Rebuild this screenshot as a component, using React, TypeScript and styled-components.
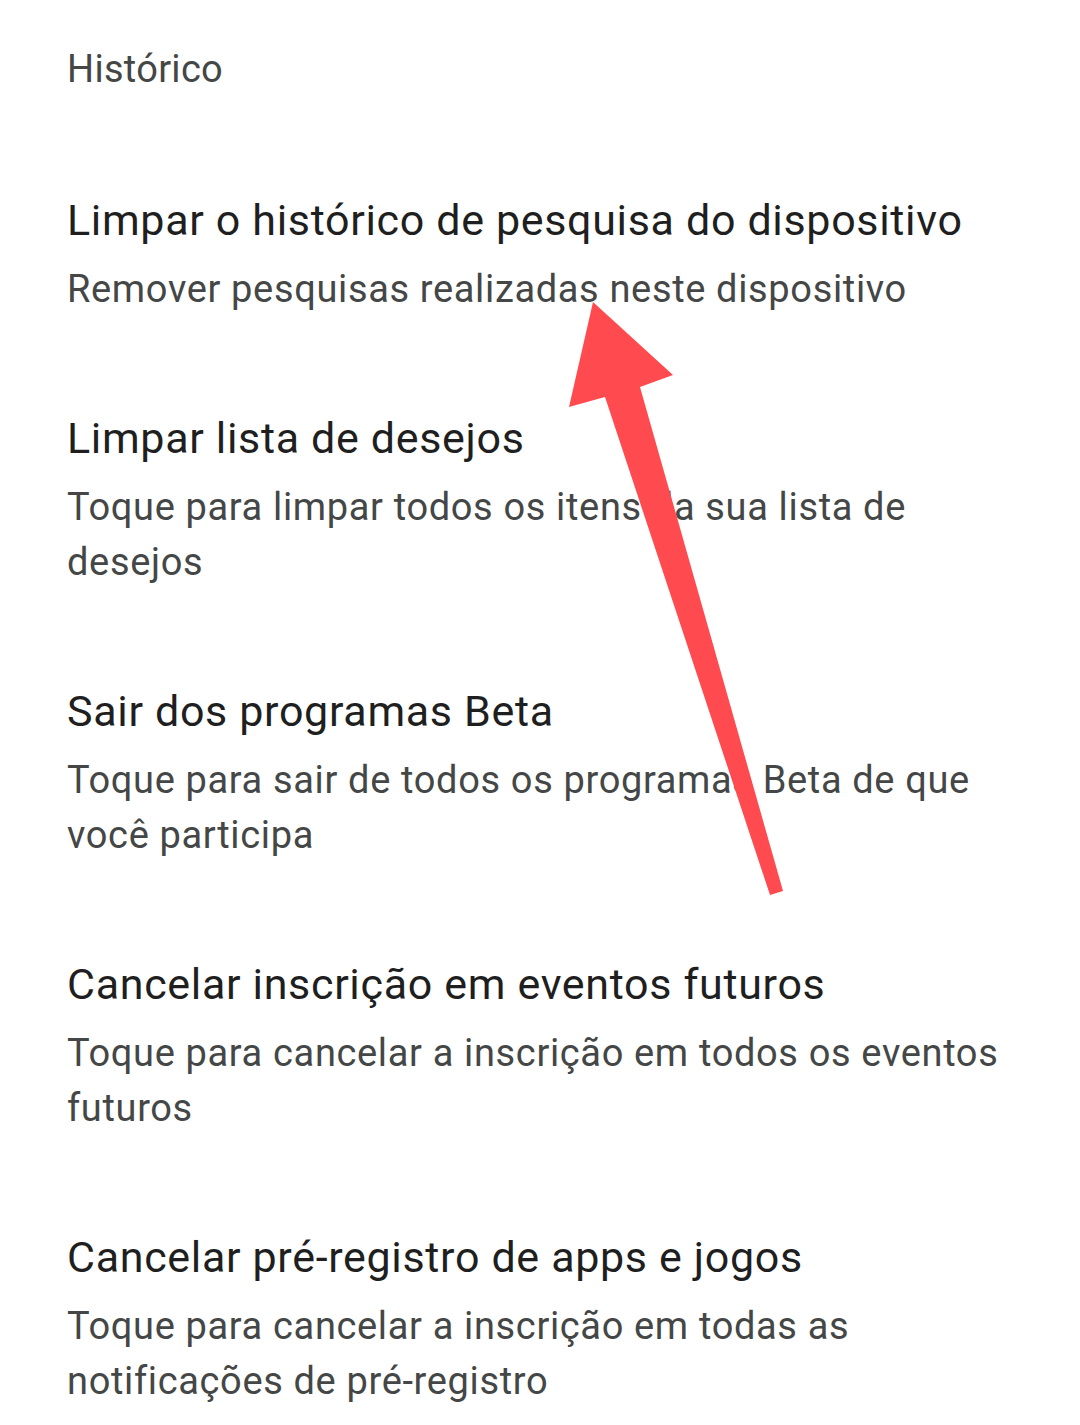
import React from 'react';
import styled, { createGlobalStyle } from 'styled-components';

const GlobalStyle = createGlobalStyle`
  html, body {
    margin: 0;
    padding: 0;
    background: #ffffff;
  }
  body {
    font-family: Roboto, "Noto Sans", "Liberation Sans", sans-serif;
    -webkit-font-smoothing: antialiased;
  }
`

const Screen = styled.div`
  position: relative;
  width: 1080px;
  height: 1425px;
  overflow: hidden;
  background: #ffffff;
`

const Content = styled.div`
  display: flex;
  flex-direction: column;
  padding: 44px 53px 0 67px;
`

const SectionHeader = styled.div`
  font-size: 38px;
  line-height: 50px;
  letter-spacing: 0.3px;
  color: #444746;
  margin-bottom: 98px;
`

const List = styled.div`
  display: flex;
  flex-direction: column;
  gap: 93px;
`

const Item = styled.div`
  display: flex;
  flex-direction: column;
  gap: 14px;
`

const Title = styled.div`
  font-size: 43px;
  line-height: 56px;
  letter-spacing: 0.67px;
  color: #1f1f1f;
`

const Summary = styled.div`
  font-size: 38px;
  line-height: 55px;
  letter-spacing: 0.65px;
  color: #444746;
`

const Overlay = styled.svg`
  position: absolute;
  inset: 0;
  pointer-events: none;
`

const items = [
  {
    title: 'Limpar o histórico de pesquisa do dispositivo',
    summary: 'Remover pesquisas realizadas neste dispositivo',
  },
  {
    title: 'Limpar lista de desejos',
    summary: 'Toque para limpar todos os itens da sua lista de desejos',
  },
  {
    title: 'Sair dos programas Beta',
    summary: 'Toque para sair de todos os programas Beta de que você participa',
  },
  {
    title: 'Cancelar inscrição em eventos futuros',
    summary: 'Toque para cancelar a inscrição em todos os eventos futuros',
  },
  {
    title: 'Cancelar pré-registro de apps e jogos',
    summary: 'Toque para cancelar a inscrição em todas as notificações de pré-registro',
  },
];

const App = () => {
  return (
    <Screen>
      <GlobalStyle />
      <Content>
        <SectionHeader>Histórico</SectionHeader>
        <List>
          {items.map((item) => (
            <Item key={item.title}>
              <Title>{item.title}</Title>
              <Summary>{item.summary}</Summary>
            </Item>
          ))}
        </List>
      </Content>
      {/* annotation arrow */}
      <Overlay width="1080" height="1425" viewBox="0 0 1080 1425">
        <polygon
          points="593,302 673,375 640,387 783,891 770,895 605,397 569,407"
          fill="#ff4b4f"
        />
      </Overlay>
    </Screen>
  );
};

export default App;
